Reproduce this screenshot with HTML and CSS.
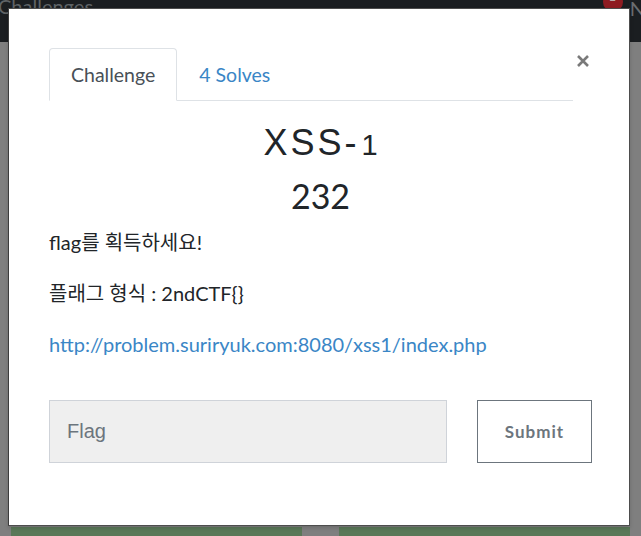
FILE: index.html
```html
<!DOCTYPE html>
<html lang="ko">
<head>
<meta charset="utf-8">
<title>XSS-1</title>
<link rel="stylesheet" href="styles.css">
</head>
<body>
<header class="navbar">
  <span class="brand">Challenges</span>
  <span class="nav-right"><span class="badge">2</span><span class="nav-n">N</span></span>
</header>
<main class="page">
  <div class="cards">
    <div class="card"></div>
    <div class="card"></div>
  </div>
</main>

<div class="modal">
  <div class="modal-head">
    <ul class="tabs">
      <li class="tab active">Challenge</li>
      <li class="tab link">4 Solves</li>
    </ul>
    <button class="close" aria-label="Close">
      <svg width="12" height="12" viewBox="0 0 12 12"><path d="M1 1L11 11M11 1L1 11" stroke="#7a7a7a" stroke-width="2.6" stroke-linecap="butt"/></svg>
    </button>
  </div>
  <h2 class="title">XSS-<span class="osf">1</span></h2>
  <h3 class="value">232</h3>
  <div class="desc">
    <p>flag를 획득하세요!</p>
    <p>플래그 형식 : 2ndCTF{}</p>
    <p><a class="url" href="#">http://problem.suriryuk.com:8080/xss1/index.php</a></p>
  </div>
  <form class="flag-row">
    <input class="flag-input" type="text" placeholder="Flag">
    <button class="submit" type="button">Submit</button>
  </form>
</div>
</body>
</html>
```

FILE: styles.css
```css
html, body {
  margin: 0;
  padding: 0;
}
body {
  background: #7f7f7f;
  font-family: Lato, "Noto Sans CJK KR", sans-serif;
  width: 641px;
  height: 536px;
  overflow: hidden;
  position: relative;
}
.navbar {
  height: 42px;
  background: #1b1e21;
  display: flex;
  justify-content: space-between;
  align-items: flex-start;
  overflow: hidden;
}
.brand {
  font-size: 20px;
  color: #5f6366;
  line-height: 20px;
  margin-left: -2px;
  margin-top: -4px;
}
.nav-right {
  display: flex;
  align-items: flex-start;
}
.badge {
  width: 20px;
  height: 20px;
  border-radius: 50%;
  background: #8e1c22;
  color: #b8a9aa;
  font-size: 11px;
  text-align: center;
  line-height: 10px;
  margin-top: -8px;
  margin-right: 7px;
}
.nav-n {
  font-size: 20px;
  color: #6a6d70;
  line-height: 20px;
  margin-top: -2px;
  margin-right: -4px;
}
.page {
  height: 494px;
  display: flex;
  flex-direction: column;
  justify-content: flex-end;
}
.cards {
  display: flex;
  gap: 37px;
  padding: 0 11px;
  height: 9px;
}
.card {
  flex: 1;
  background: #5a7858;
}

.modal {
  position: absolute;
  left: 8px;
  top: 8px;
  width: 622px;
  height: 518px;
  box-sizing: border-box;
  background: #fff;
  border: 1px solid #4d4d4d;
  border-left-color: #3c3c3c;
  padding: 39px 37px 0 40px;
  box-shadow: 0 2px 4px rgba(0,0,0,0.15);
}
.modal-head {
  display: flex;
  align-items: flex-start;
}
.tabs {
  flex: 1;
  display: flex;
  list-style: none;
  margin: 0;
  padding: 0;
  border-bottom: 1px solid #dee2e6;
}
.tab {
  font-size: 19.5px;
  line-height: 27px;
  padding: 12px 21px 12px 21px;
  border: 1px solid transparent;
  border-radius: 4px 4px 0 0;
  margin-bottom: -1px;
}
.tab.active {
  color: #495057;
  border-color: #dee2e6 #dee2e6 #fff;
  background: #fff;
}
.tab.link {
  color: #3a86c6;
}
.close {
  width: 19px;
  height: 30px;
  padding: 0 3px 0 0;
  margin-top: 7px;
  border: 0;
  background: none;
  display: flex;
  justify-content: flex-end;
}
.title {
  margin: 21px 0 0;
  padding-left: 3px;
  text-align: center;
  font-family: "Liberation Sans", Arial, sans-serif;
  font-weight: 400;
  font-size: 36px;
  line-height: 42px;
  letter-spacing: 3px;
  color: #212529;
}
.osf {
  font-size: 29px;
  margin-left: 2px;
}
.value {
  margin: 9px 0 0;
  text-align: center;
  font-weight: 400;
  font-size: 34px;
  line-height: 41px;
  color: #212529;
}
.desc {
  margin-top: 11px;
  color: #212529;
  font-size: 20px;
  line-height: 30px;
}
.desc p {
  margin: 0 0 21px;
}
.desc p:last-child {
  margin-bottom: 0;
}
.url {
  color: #3a86c6;
  text-decoration: none;
}
.flag-row {
  margin-top: 41px;
  display: grid;
  grid-template-columns: 1fr 115px;
  column-gap: 30px;
}
.flag-input {
  height: 63px;
  box-sizing: border-box;
  background: #efefef;
  border: 1px solid #cfd3d9;
  padding: 0 17px;
  font-family: "Liberation Sans", Arial, sans-serif;
  font-size: 20px;
  color: #495057;
  outline: none;
}
.flag-input::placeholder {
  color: #6c757d;
}
.submit {
  height: 63px;
  box-sizing: border-box;
  background: #fff;
  border: 1px solid #6c757d;
  color: #6c757d;
  font-family: Lato, sans-serif;
  font-weight: 700;
  font-size: 17px;
  letter-spacing: 1px;
}
```
